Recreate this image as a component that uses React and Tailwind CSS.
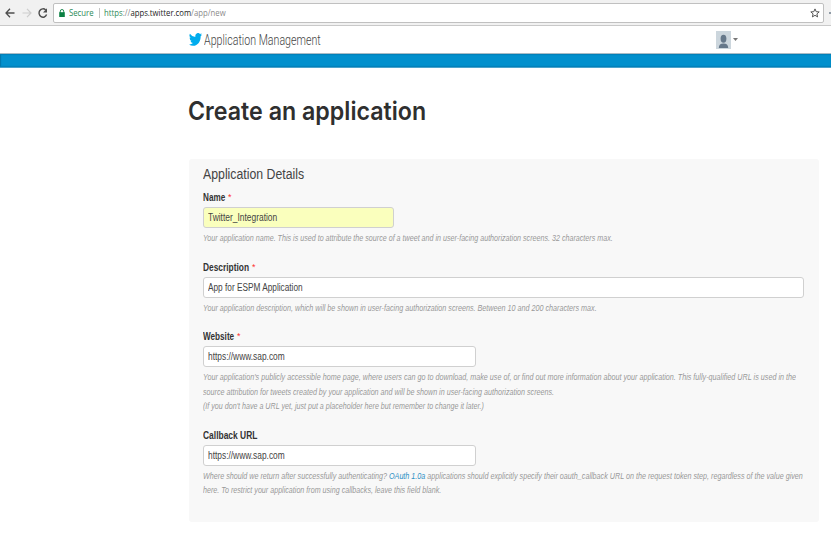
import React, { useLayoutEffect, useRef, useState } from "react";

// Sets a single line of condensed text to a fixed measure.
function Fit({ w, className = "", children }) {
  const ref = useRef(null);
  const [scale, setScale] = useState(1);
  useLayoutEffect(() => {
    const measure = () => {
      if (ref.current) setScale(w / ref.current.offsetWidth);
    };
    measure();
    document.fonts.ready.then(measure);
  }, [w]);
  return (
    <span className={"block whitespace-nowrap " + className} style={{ width: w }}>
      <span
        ref={ref}
        className="inline-block origin-left"
        style={{ transform: `scaleX(${scale})` }}
      >
        {children}
      </span>
    </span>
  );
}

function Toolbar() {
  return (
    <div className="flex h-[26px] items-center border-b border-[#c9c9c9] bg-[#f1f1f1] font-['Open_Sans',sans-serif]">
      <svg className="ml-[5px] h-[10px] w-[10px] shrink-0" viewBox="0 0 10 10" fill="none" stroke="#4d4d4d" strokeWidth="1.3">
        <path d="M9.5 5H1.3M5 .8L1 5l4 4.200" />
      </svg>
      <svg className="ml-[7px] h-[10px] w-[10px] shrink-0" viewBox="0 0 10 10" fill="none" stroke="#cdcdcd" strokeWidth="1.2">
        <path d="M.5 5h8.2M5 .8l4 4.200-4 4.200" />
      </svg>
      <svg className="ml-[6px] h-[10px] w-[10px] shrink-0" viewBox="0 0 10 10" fill="none" stroke="#4d4d4d" strokeWidth="1.4">
        <path d="M8.6 6.600A3.9 4.200 0 1 1 7.7 2" />
        <path d="M9 .3v4.200H5z" fill="#4d4d4d" stroke="none" />
      </svg>
      <div className="ml-[5px] flex h-[20px] w-[771px] shrink-0 items-center rounded-[2px] border border-[#c0c0c0] bg-white">
        <svg className="ml-[5px] h-[8px] w-[6px]" viewBox="0 0 6 8">
          <path d="M1.3 4V2.2a1.7 1.7 0 0 1 3.4 0V4" fill="none" stroke="#0b8043" strokeWidth=".9" />
          <path d="M.2 3.2h5.6V8H.2z" fill="#0b8043" />
        </svg>
        <Fit w={25} className="ml-[4px] text-[9px] leading-[18px] text-[#2c8a57]">Secure</Fit>
        <span className="ml-[5px] h-[10px] w-px bg-[#c4c4c4]" />
        <Fit w={122} className="ml-[4px] text-[9px] leading-[18px] text-[#8a8a8a]">
          <span className="text-[#2c8a57]">https</span>://<span className="text-[#222]">apps.twitter.com</span>/app/new
        </Fit>
        <svg className="mr-[3px] ml-auto h-[10px] w-[10px]" viewBox="0 0 10 10" fill="none" stroke="#555" strokeWidth="1">
          <path d="M5 .9l1.2 2.8 3 .2-2.3 2 .7 3L5 7.3 2.4 8.9l.7-3-2.3-2 3-.2z" />
        </svg>
      </div>
      <span className="ml-auto h-[2px] w-[2px] bg-[#8f9ba6]" />
    </div>
  );
}

function Header() {
  return (
    <div className="flex h-[27px] items-center bg-white">
      <svg className="mb-px ml-[189px] h-[13px] w-[13px] shrink-0" viewBox="0 0 24 20" preserveAspectRatio="none" fill="#00aced">
        <path d="M24 2.4a9.8 9.8 0 0 1-2.8.8A5 5 0 0 0 23.300 .5a9.900 9.900 0 0 1-3.100 1.200A4.900 4.900 0 0 0 11.800 6.200 14 14 0 0 1 1.700 1a4.900 4.900 0 0 0 1.500 6.600 4.900 4.900 0 0 1-2.200-.6v.1a4.900 4.900 0 0 0 3.900 4.800 4.900 4.900 0 0 1-2.200.1 4.900 4.900 0 0 0 4.600 3.400A9.900 9.900 0 0 1 0 17.500 14 14 0 0 0 7.500 19.700c9.100 0 14-7.500 14-14v-.6A10 10 0 0 0 24 2.400z" />
      </svg>
      <Fit w={117} className="mt-px ml-[2px] font-['Roboto',sans-serif] text-[14px] leading-[26px] font-light text-[#444]">
        Application Management
      </Fit>
      <svg className="ml-[395px] h-[18px] w-[15px] shrink-0" viewBox="0 0 15 18">
        <path d="M0 0h15v18H0z" fill="#ccd6dd" />
        <ellipse cx="7.500" cy="7.800" rx="2.900" ry="4" fill="#66788a" />
        <path d="M2.800 17c0-3.200 1.700-4.600 4.700-4.600s4.700 1.400 4.700 4.600z" fill="#66788a" />
      </svg>
      <svg className="ml-[2px] h-[3px] w-[5px] shrink-0" viewBox="0 0 4 3" preserveAspectRatio="none">
        <path d="M0 0h4L2 3z" fill="#777" />
      </svg>
    </div>
  );
}

function Label({ w, required, children }) {
  return (
    <div className="flex h-[14px] items-start text-[10px] leading-[16px] font-bold text-[#333]">
      <Fit w={w}>{children}</Fit>
      {required && <span className="ml-[3px] text-[9px] leading-[14px] font-normal text-[#f33]">*</span>}
    </div>
  );
}

function Field({ box, w, children }) {
  return (
    <div className={"mt-[3px] flex h-[21px] items-center rounded-[3px] border border-[#d0d0d0] pl-[3.500px] text-[10px] text-[#444] " + box}>
      <Fit w={w}>{children}</Fit>
    </div>
  );
}

function Help({ w, children }) {
  return <Fit w={w} className="h-[14.500px] text-[9px] leading-[14.500px] text-[#999] italic">{children}</Fit>;
}

export default function App() {
  return (
    <div className="h-[534px] w-[831px] overflow-hidden bg-white font-['Liberation_Sans',Arial,sans-serif]">
      <Toolbar />
      <Header />
      <div className="h-[15px] border-t border-b border-t-[#a9bcc6] border-b-[#4ba3cb] bg-[#0290cd] shadow-[inset_0_1px_1px_#0480b8,inset_0_-1px_1px_#0480b8,inset_1px_0_1px_#0474a8]" />
      <h1 className="mt-[23px] ml-[188px] h-[40px]">
        <Fit w={238.5} className="font-['Inter',sans-serif] text-[25.500px] leading-[40px] font-semibold text-[#2f2f2f]">
          Create an application
        </Fit>
      </h1>
      <main className="mt-[28px] ml-[189px] h-[363px] w-[630px] rounded-[3px] bg-[#f8f8f8] pt-[6px] pl-[14px]">
        <h2>
          <Fit w={101} className="text-[14px] leading-[18px] text-[#444]">Application Details</Fit>
        </h2>
        <section className="mt-[7px]">
          <Label w={22} required>Name</Label>
          <Field box="w-[191px] bg-[#faffbd]" w={69}>Twitter_Integration</Field>
          <div className="mt-[3px]">
            <Help w={410}>Your application name. This is used to attribute the source of a tweet and in user-facing authorization screens. 32 characters max.</Help>
          </div>
        </section>
        <section className="mt-[14px]">
          <Label w={46} required>Description</Label>
          <Field box="w-[601px] bg-white" w={95}>App for ESPM Application</Field>
          <div className="mt-[3px]">
            <Help w={394}>Your application description, which will be shown in user-facing authorization screens. Between 10 and 200 characters max.</Help>
          </div>
        </section>
        <section className="mt-[14px]">
          <Label w={31} required>Website</Label>
          <Field box="w-[273px] bg-white" w={77}>https://www.sap.com</Field>
          <div className="mt-[3px]">
            <Help w={593}>Your application's publicly accessible home page, where users can go to download, make use of, or find out more information about your application. This fully-qualified URL is used in the</Help>
            <Help w={351}>source attribution for tweets created by your application and will be shown in user-facing authorization screens.</Help>
            <Help w={281}>(If you don't have a URL yet, just put a placeholder here but remember to change it later.)</Help>
          </div>
        </section>
        <section className="mt-[14px]">
          <Label w={54}>Callback URL</Label>
          <Field box="w-[273px] bg-white" w={77}>https://www.sap.com</Field>
          <div className="mt-[3px]">
            <Help w={600}>
              Where should we return after successfully authenticating? <span className="text-[#2b8fc4]">OAuth 1.0a</span> applications should explicitly specify their oauth_callback URL on the request token step, regardless of the value given
            </Help>
            <Help w={238}>here. To restrict your application from using callbacks, leave this field blank.</Help>
          </div>
        </section>
      </main>
    </div>
  );
}
